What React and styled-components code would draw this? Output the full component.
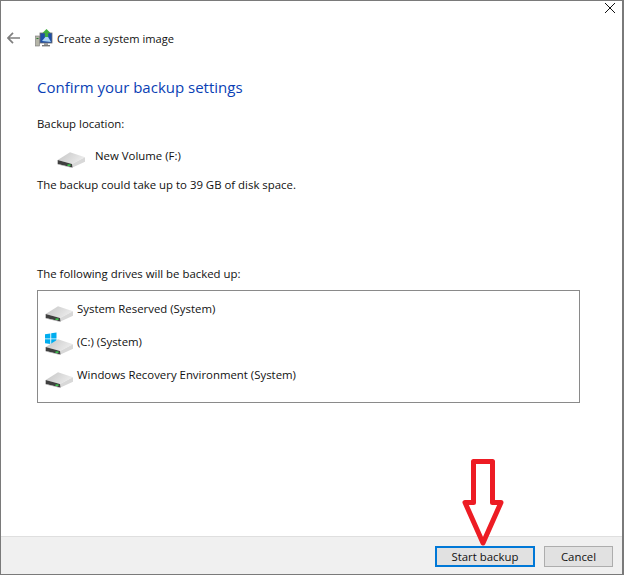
import React from "react";
import styled, { createGlobalStyle } from "styled-components";

const GlobalStyle = createGlobalStyle`
  html, body {
    margin: 0;
    padding: 0;
    background: #ffffff;
  }
`;

const DRIVES = [
  { name: "System Reserved (System)" },
  { name: "(C:) (System)", windows: true },
  { name: "Windows Recovery Environment (System)" },
];

const DriveIcon = ({ windows }) => (
  <IconBox>
    <svg width="30" height="27" viewBox="0 0 30 27">
      <defs>
        <linearGradient id="driveTop" x1="0" y1="0" x2="1" y2="0.4">
          <stop offset="0" stopColor="#c4c4c4" />
          <stop offset="1" stopColor="#ebebeb" />
        </linearGradient>
      </defs>
      {windows && (
        <g fill="#00adef" transform="translate(0 5)">
          <path d="M0 1.200 5.300 .4V5.400H0Z" />
          <path d="M6.200 .3 11.500 -.4V5.400H6.200Z" />
          <path d="M0 6.300H5.300V11L0 10.300Z" />
          <path d="M6.200 6.300H11.500V11.800L6.200 11.100Z" />
        </g>
      )}
      <path d="M.7 19 13 11.300 28 16.300 15 23Z" fill="url(#driveTop)" />
      <path d="M15 23 28 16.300V20.700L15.500 26.500Z" fill="#d8d8d8" />
      <path d="M.7 19 15 23 15.500 26.500 .7 23Z" fill="#3f3f3f" />
      <path d="M.7 23 15.500 26.500 15.500 27 .7 23.600Z" fill="#a8a8a8" />
      <rect x="10.500" y="23.400" width="3" height="1.600" fill="#38c24a" />
    </svg>
  </IconBox>
);

const App = () => (
  <>
    <GlobalStyle />
    <Window>
      <CloseRow>
        <svg width="10" height="10" viewBox="0 0 10 10">
          <path d="M0 0 10 10M10 0 0 10" stroke="#111" strokeWidth="1" fill="none" />
        </svg>
      </CloseRow>

      <NavRow>
        <svg width="13" height="12" viewBox="0 0 13 12">
          <path d="M6 .8 1 6l5 5.200M1 6h12" stroke="#7f7f7f" strokeWidth="1.700" fill="none" />
        </svg>
        <svg width="18" height="18" viewBox="0 0 18 18">
          <rect x="0.500" y="7" width="4" height="10" fill="#b5b5a8" stroke="#777" strokeWidth="0.600" />
          <rect x="1.500" y="9" width="2" height="1" fill="#2d7d32" />
          <rect x="5" y="4" width="12" height="10" fill="#1d4fa8" stroke="#6d6d6d" strokeWidth="0.800" />
          <path d="M7 12 12 6 16 13Z" fill="#a8d4f5" />
          <rect x="9" y="14" width="4" height="2" fill="#9a9a9a" />
          <rect x="7" y="16" width="8" height="1.400" fill="#777" />
          <path d="M11.500 0 15.500 4H13.200V8H9.800V4H7.500Z" fill="#3eae3e" />
        </svg>
        <NavTitle>Create a system image</NavTitle>
      </NavRow>

      <Content>
        <Heading>Confirm your backup settings</Heading>
        <Label>Backup location:</Label>
        <LocationRow>
          <DriveIcon />
          <LocationName>New Volume (F:)</LocationName>
        </LocationRow>
        <Label>The backup could take up to 39 GB of disk space.</Label>
        <DrivesLabel>The following drives will be backed up:</DrivesLabel>
        <DriveList>
          {DRIVES.map((drive) => (
            <DriveRow key={drive.name}>
              <DriveIcon windows={drive.windows} />
              <DriveName>{drive.name}</DriveName>
            </DriveRow>
          ))}
        </DriveList>
      </Content>

      <Footer>
        <PrimaryButton>Start backup</PrimaryButton>
        <CancelButton>Cancel</CancelButton>
      </Footer>

      <Callout width="46" height="92" viewBox="0 0 46 92">
        <path
          d="M11.500 3.500H30.500V44.500H39L21 85 3 44.500H11.500Z"
          fill="#fff"
          stroke="#ed1c24"
          strokeWidth="5"
          strokeLinejoin="round"
        />
      </Callout>
    </Window>
  </>
);

export default App;

const Window = styled.div`
  position: relative;
  box-sizing: border-box;
  width: 624px;
  height: 575px;
  display: flex;
  flex-direction: column;
  background: #ffffff;
  border: 1px solid #7a7a7a;
  border-right-width: 2px;
  font-family: "Open Sans", "Noto Sans", sans-serif;
  font-size: 11.4px;
  color: #111111;
`;

const CloseRow = styled.div`
  display: flex;
  justify-content: flex-end;
  height: 10px;
  padding: 2px 7px 0 0;
`;

const NavRow = styled.div`
  display: flex;
  align-items: center;
  height: 20px;
  margin-top: 15px;
  padding-left: 6px;
  gap: 15px;
`;

const NavTitle = styled.span`
  margin-left: -11px;
  font-size: 11.1px;
`;

const Content = styled.div`
  flex: 1;
  display: flex;
  flex-direction: column;
  padding: 0 42px 0 36px;
`;

const Heading = styled.h1`
  margin: 28px 0 0;
  font-size: 15px;
  line-height: 22px;
  font-weight: 400;
  color: #0a3fb5;
`;

const Label = styled.div`
  line-height: 16px;
  margin-top: 18px;
`;

const LocationRow = styled.div`
  display: flex;
  align-items: flex-start;
  gap: 8px;
  height: 26px;
  margin: 9px 0 -8px 20px;
`;

const LocationName = styled.span`
  line-height: 16px;
  margin-top: 7px;
`;

const DrivesLabel = styled(Label)`
  margin-top: 73px;
`;

const DriveList = styled.div`
  box-sizing: border-box;
  height: 113px;
  margin-top: 8px;
  padding: 4px 0 0 7px;
  border: 1px solid #8a8a8a;
`;

const DriveRow = styled.div`
  display: flex;
  height: 33px;
  align-items: flex-start;
  gap: 2px;
`;

const IconBox = styled.div`
  width: 30px;
  height: 26px;
  flex: none;
`;

const DriveName = styled.span`
  line-height: 16px;
  margin-top: 6px;
`;

const Footer = styled.div`
  box-sizing: border-box;
  height: 38px;
  display: flex;
  justify-content: flex-end;
  align-items: center;
  gap: 9px;
  padding: 2px 9px 0 0;
  background: #f0f0f0;
  border-top: 1px solid #dfdfdf;
`;

const Button = styled.button`
  box-sizing: border-box;
  padding: 0;
  background: #e1e1e1;
  font: inherit;
  color: #111111;
`;

const PrimaryButton = styled(Button)`
  width: 100px;
  height: 21px;
  border: 2px solid #0078d7;
`;

const CancelButton = styled(Button)`
  width: 69px;
  height: 21px;
  border: 1px solid #adadad;
`;

const Callout = styled.svg`
  position: absolute;
  left: 461px;
  top: 457px;
`;
